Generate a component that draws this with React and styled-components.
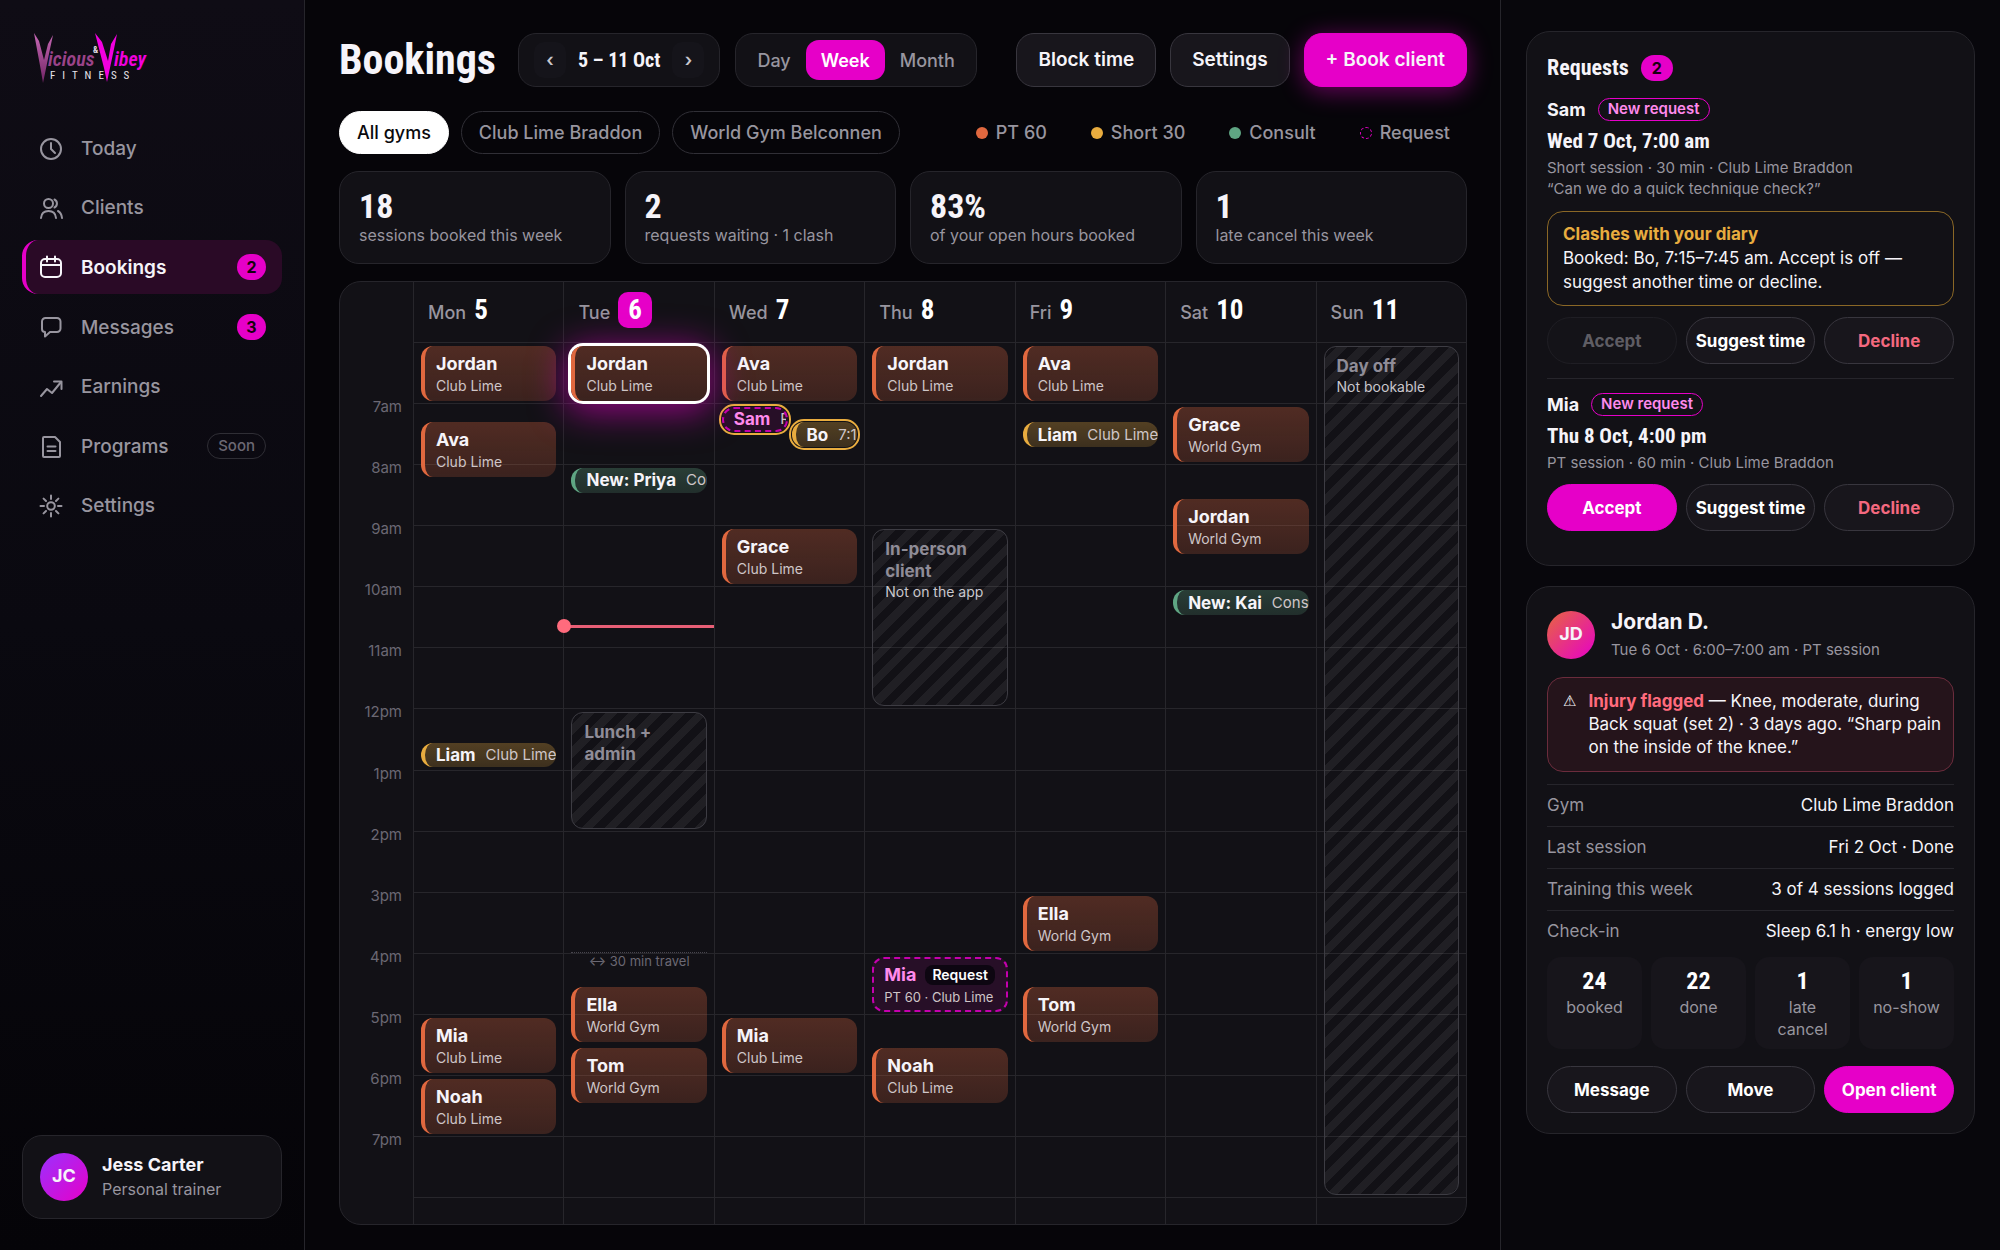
import React from 'react';
import styled, { createGlobalStyle, css } from 'styled-components';

const c = {
  pink: '#e600c8',
  pinkSoft: '#ff8aec',
  text: '#f6f4f9',
  mute: '#98959f',
  dim: '#6b6873',
  line: '#26252b',
  grid: 'rgba(255, 255, 255, 0.09)',
  card: '#121116',
  raised: '#18161c',
  orange: '#e0683f',
  amber: '#e8ac3f',
  green: '#5fa583',
  red: '#ff6b7d',
};
const sans = `Inter, "Noto Sans", sans-serif`;
const narrow = `"Roboto Condensed", "Liberation Sans Narrow", Roboto, sans-serif`;

const Global = createGlobalStyle`
  *, *::before, *::after { box-sizing: border-box; }
  body { margin: 0; background: #060509; color: ${c.text}; font-family: ${sans}; }
  button { font: inherit; color: inherit; margin: 0; padding: 0; border: 0; background: none; cursor: pointer; text-align: left; }
  a { color: inherit; text-decoration: none; }
  h1, h2, h3, p, dl, dd, dt, ul { margin: 0; padding: 0; }
  ul { list-style: none; }
`;

const Shell = styled.div`
  display: grid;
  grid-template-columns: 305px minmax(0, 1fr) 500px;
  min-height: 100vh;
`;

/* Sidebar */
const Sidebar = styled.aside`
  display: flex;
  flex-direction: column;
  padding: 31px 22px;
  border-right: 1px solid ${c.line};
  background: linear-gradient(180deg, #0f0c15 0%, #0a0910 50%, #050408 100%);
`;
const Brand = styled.a`
  display: block;
  height: 91px;
  padding-left: 10px;
`;
const Nav = styled.nav`
  display: flex;
  flex-direction: column;
  gap: 6px;
`;
const NavLink = styled.a`
  display: flex;
  align-items: center;
  gap: 18px;
  padding: 14px 16px 14px 13px;
  border-left: 4px solid ${(p) => (p.$active ? c.pink : 'transparent')};
  border-radius: 16px;
  background: ${(p) => (p.$active ? '#2a0a26' : 'transparent')};
  color: ${(p) => (p.$active ? c.text : c.mute)};
  font-size: 19px;
  font-weight: ${(p) => (p.$active ? 600 : 500)};
  line-height: 25px;
`;
const NavText = styled.span`
  flex: 1;
`;
const Count = styled.span`
  min-width: ${(p) => (p.$wide ? 32 : 29)}px;
  height: 26px;
  border-radius: 13px;
  background: ${c.pink};
  color: #16000f;
  font-size: 16px;
  font-weight: 700;
  line-height: 26px;
  text-align: center;
`;
const Soon = styled.span`
  height: 26px;
  padding: 0 10px;
  border: 1px solid #2f2e35;
  border-radius: 13px;
  color: ${c.dim};
  font-size: 15px;
  font-weight: 500;
  line-height: 24px;
`;
const UserCard = styled.button`
  display: flex;
  align-items: center;
  gap: 14px;
  margin-top: auto;
  padding: 17px;
  border: 1px solid ${c.line};
  border-radius: 20px;
  background: ${c.card};
`;
const Avatar = styled.span`
  flex: none;
  width: 48px;
  height: 48px;
  border-radius: 50%;
  background: linear-gradient(135deg, ${(p) => p.$from}, ${c.pink});
  font-size: 18px;
  font-weight: 700;
  line-height: 46px;
  text-align: center;
`;
const Stack = styled.span`
  display: flex;
  flex-direction: column;
`;
const UserName = styled.span`
  font-size: 18px;
  font-weight: 700;
  line-height: 24px;
`;
const UserRole = styled.span`
  color: ${c.mute};
  font-size: 16px;
  line-height: 24px;
`;

/* Main column */
const Main = styled.main`
  display: flex;
  flex-direction: column;
  padding: 33px 33px 25px 34px;
`;
const Topbar = styled.header`
  display: flex;
  align-items: center;
  gap: 15px;
  margin-bottom: 24px;
`;
const Title = styled.h1`
  margin-right: 7px;
  font: 700 42px/54px ${narrow};
`;
const Range = styled.div`
  display: flex;
  align-items: center;
  gap: 12px;
  height: 54px;
  padding: 0 15px;
  border: 1px solid ${c.line};
  border-radius: 18px;
  background: ${c.card};
  font: 700 20px/36px ${narrow};
`;
const Step = styled.button`
  width: 32px;
  height: 36px;
  border-radius: 10px;
  background: #15141a;
  color: #c9c7ce;
  font: 600 18px/30px ${sans};
  text-align: center;
`;
const Segments = styled.div`
  display: flex;
  padding: 6px;
  border: 1px solid ${c.line};
  border-radius: 18px;
  background: ${c.card};
`;
const Segment = styled.button`
  height: 40px;
  padding: 0 15px;
  border-radius: 13px;
  background: ${(p) => (p.$on ? c.pink : 'transparent')};
  color: ${(p) => (p.$on ? '#fff' : c.mute)};
  font-size: 18px;
  font-weight: ${(p) => (p.$on ? 600 : 500)};
`;
const Actions = styled.div`
  display: flex;
  gap: 14px;
  margin-left: auto;
`;
const Action = styled.button`
  height: 54px;
  padding: 0 21px 2px;
  border: 1px solid ${(p) => (p.$primary ? c.pink : '#38363e')};
  border-radius: 18px;
  background: ${(p) => (p.$primary ? c.pink : c.raised)};
  box-shadow: ${(p) => (p.$primary ? '0 4px 24px rgba(230, 0, 200, 0.45)' : 'none')};
  font-size: 19px;
  font-weight: 600;
  white-space: nowrap;
`;

const Filters = styled.div`
  display: flex;
  align-items: center;
  gap: 12px;
  margin-bottom: 17px;
`;
const Chip = styled.button`
  height: 43px;
  padding: 0 17px;
  border: 1px solid ${(p) => (p.$on ? '#fff' : '#302f36')};
  border-radius: 22px;
  background: ${(p) => (p.$on ? '#fff' : 'transparent')};
  color: ${(p) => (p.$on ? '#0a090d' : c.mute)};
  font-size: 18px;
  font-weight: 500;
  white-space: nowrap;
`;
const Legend = styled.ul`
  display: flex;
  gap: 44px;
  margin-left: auto;
  padding-right: 17px;
`;
const LegendItem = styled.li`
  display: flex;
  align-items: center;
  gap: 8px;
  color: ${c.mute};
  font-size: 18px;
  font-weight: 500;
  &::before {
    content: '';
    width: 12px;
    height: 12px;
    border-radius: 50%;
    background: ${(p) => p.$color};
    ${(p) => p.$dashed && css`border: 1px dashed ${c.pink};`}
  }
`;

const Kpis = styled.div`
  display: grid;
  grid-template-columns: repeat(4, 1fr);
  gap: 14px;
  margin-bottom: 17px;
`;
const Kpi = styled.div`
  display: flex;
  flex-direction: column;
  padding: 16px 19px;
  border: 1px solid ${c.line};
  border-radius: 20px;
  background: ${c.card};
`;
const KpiValue = styled.strong`
  font: 700 34px/36px ${narrow};
`;
const KpiLabel = styled.span`
  color: ${c.mute};
  font-size: 16px;
  line-height: 23px;
`;

/* Calendar */
const Calendar = styled.section`
  flex: 1;
  display: flex;
  flex-direction: column;
  min-height: 900px;
  border: 1px solid ${c.line};
  border-radius: 22px;
  background: ${c.card};
  overflow: hidden;
`;
const columns = css`
  display: grid;
  grid-template-columns: 73px repeat(7, minmax(0, 1fr));
`;
const Heads = styled.div`
  ${columns}
`;
const Head = styled.div`
  display: flex;
  align-items: baseline;
  gap: 8px;
  height: 61px;
  padding: 10px 14px 0;
  border-left: 1px solid ${c.grid};
  border-bottom: 1px solid ${c.grid};
  color: ${c.mute};
  font-size: 18px;
  font-weight: 500;
`;
const DayNumber = styled.span`
  padding: ${(p) => (p.$today ? '0 10px' : 0)};
  border-radius: 10px;
  background: ${(p) => (p.$today ? c.pink : 'transparent')};
  color: #fff;
  font: 700 27px/36px ${narrow};
`;
const Days = styled.div`
  ${columns}
  flex: 1;
`;
const Hours = styled.div`
  display: grid;
  grid-template-rows: repeat(14, 1fr);
  margin-bottom: 26px;
`;
const Hour = styled.span`
  margin-top: -7px;
  padding-right: 11px;
  color: ${c.dim};
  font-size: 15px;
  line-height: 20px;
  text-align: right;
`;
const Day = styled.div`
  display: grid;
  padding-bottom: 26px;
  border-left: 1px solid ${c.grid};
`;
const Track = styled.div`
  position: relative;
  display: grid;
  grid-template-rows: repeat(14, 1fr);
`;
const Slot = styled.div`
  border-bottom: 1px solid ${c.grid};
`;

const tones = {
  pt: ['224, 104, 64', c.orange],
  short: ['232, 172, 63', c.amber],
  consult: ['95, 165, 131', c.green],
};
const rings = {
  selected: css`
    z-index: 1;
    box-shadow: 0 0 0 3px #fff, 0 6px 36px 5px rgba(230, 0, 200, 0.6);
  `,
  clash: css`
    outline: 2px solid ${c.amber};
    outline-offset: 1px;
  `,
};
const lanes = {
  full: ['7px', '7px'],
  left: ['7px', 'calc(50% + 2px)'],
  right: ['calc(50% + 2px)', '7px'],
};
const placed = css`
  position: absolute;
  top: calc(${(p) => ((p.$start - 6) / 14) * 100}% + 3px);
  height: calc(${(p) => (p.$hours / 14) * 100}% - 6px);
  left: ${(p) => lanes[p.$lane || 'full'][0]};
  right: ${(p) => lanes[p.$lane || 'full'][1]};
`;
const look = {
  booked: css`
    border-left: 4px solid ${(p) => tones[p.$tone][1]};
    padding-left: 11px;
    background: linear-gradient(180deg, rgba(${(p) => tones[p.$tone][0]}, 0.3), rgba(${(p) => tones[p.$tone][0]}, 0.2));
  `,
  request: css`
    border: 2px dashed #c400ad;
    padding-left: 10px;
    background: rgba(230, 0, 200, 0.1);
    color: ${c.pinkSoft};
  `,
};
const EventBox = styled.button`
  ${placed}
  display: flex;
  overflow: hidden;
  border-radius: 12px;
  white-space: nowrap;
  ${(p) => (p.$tone === 'request' ? look.request : look.booked)}
  ${(p) =>
    p.$hours < 1
      ? css`
          align-items: center;
          gap: 10px;
        `
      : css`
          flex-direction: column;
          justify-content: center;
          padding-top: 3px;
        `}
  ${(p) => rings[p.$ring]}
`;
const EventTitle = styled.span`
  display: flex;
  align-items: center;
  gap: 9px;
  font-size: ${(p) => (p.$inline ? 17 : 18)}px;
  font-weight: 700;
  line-height: 22px;
`;
const noteSizes = { inline: 15, stacked: 14, tight: 13 };
const EventNote = styled.span`
  color: #cfc6c8;
  font-size: ${(p) => noteSizes[p.$fit]}px;
  line-height: 22px;
`;
const Tag = styled.span`
  padding: 0 7px;
  border-radius: 8px;
  background: #0d0611;
  color: #fff;
  font-size: 14px;
  font-weight: 600;
  line-height: 20px;
`;
const Blocked = styled.div`
  ${placed}
  display: flex;
  flex-direction: column;
  padding: 8px 12px;
  border: 1px solid #3d3c43;
  border-radius: 12px;
  background: repeating-linear-gradient(135deg, transparent 0 8px, rgba(255, 255, 255, 0.06) 8px 16px);
  color: #8f8c97;
  font-size: 17px;
  font-weight: 700;
  line-height: 22px;
`;
const BlockedNote = styled.span`
  color: #c9c7cd;
  font-size: 14px;
  font-weight: 400;
  line-height: 20px;
  white-space: nowrap;
`;
const Travel = styled.div`
  ${placed}
  margin-top: -5px;
  border-top: 1px dotted #47454d;
  color: ${c.dim};
  font-size: 13px;
  line-height: 16px;
  text-align: center;
`;
const Now = styled.div`
  position: absolute;
  top: ${(p) => ((p.$at - 6) / 14) * 100}%;
  left: 0;
  right: 0;
  height: 3px;
  background: #e85f76;
  &::before {
    content: '';
    position: absolute;
    top: -6px;
    left: -7px;
    width: 14px;
    height: 14px;
    border-radius: 50%;
    background: ${c.red};
  }
`;

/* Right panel */
const Panel = styled.aside`
  display: flex;
  flex-direction: column;
  gap: 20px;
  padding: 31px 25px;
  border-left: 1px solid ${c.line};
  background: #08070c;
`;
const Card = styled.section`
  padding: 20px;
  border: 1px solid ${c.line};
  border-radius: 24px;
  background: ${c.card};
`;
const CardTitle = styled.h2`
  display: flex;
  align-items: center;
  gap: 12px;
  font: 700 22px/32px ${narrow};
  ${Count} { font-family: ${sans}; }
`;
const Request = styled.article`
  padding: 13px 0 14px;
  & + & { border-top: 1px solid ${c.line}; }
`;
const RequestHead = styled.h3`
  display: flex;
  align-items: center;
  gap: 12px;
  height: 25px;
  font-size: 18px;
  font-weight: 700;
`;
const Pill = styled.span`
  height: 23px;
  padding: 0 9px;
  border: 1px solid ${c.pink};
  border-radius: 12px;
  color: ${c.pinkSoft};
  font-size: 15px;
  font-weight: 600;
  line-height: 20px;
`;
const When = styled.p`
  margin-top: 4px;
  font: 700 21px/31px ${narrow};
`;
const Meta = styled.p`
  color: ${c.mute};
  font-size: 15px;
  line-height: 21px;
`;
const Notice = styled.div`
  display: flex;
  gap: 12px;
  margin-top: 12px;
  padding: ${(p) => (p.$danger ? 12 : 10)}px 11px ${(p) => (p.$danger ? 12 : 11)}px 15px;
  border: 1px solid ${(p) => (p.$danger ? '#6b2c3c' : '#8a6726')};
  border-radius: 16px;
  background: ${(p) => (p.$danger ? '#25141b' : 'transparent')};
  font-size: 17px;
  line-height: ${(p) => (p.$danger ? 23 : 24)}px;
`;
const NoticeLead = styled.strong`
  color: ${(p) => (p.$danger ? c.red : c.amber)};
  font-weight: 700;
  display: ${(p) => (p.$danger ? 'inline' : 'block')};
`;
const WarnSign = styled.span`
  font: 15px/23px "DejaVu Sans", sans-serif;
`;
const Buttons = styled.div`
  display: grid;
  grid-template-columns: repeat(3, 1fr);
  gap: 9px;
  margin-top: ${(p) => p.$gap || 11}px;
`;
const Pushable = styled.button`
  height: 47px;
  border: 1px solid ${(p) => (p.$primary ? c.pink : '#38363e')};
  border-radius: 24px;
  background: ${(p) => (p.$primary ? c.pink : c.raised)};
  color: ${(p) => (p.$danger ? '#f4697f' : '#fff')};
  font-size: 17px;
  font-weight: 700;
  text-align: center;
  white-space: nowrap;
  &:disabled {
    border-color: #1f1e24;
    background: #141318;
    color: #5f5d64;
    cursor: default;
  }
`;
const Person = styled.header`
  display: flex;
  align-items: center;
  gap: 16px;
  margin-bottom: 14px;
`;
const PersonName = styled.h2`
  font-size: 21px;
  font-weight: 700;
  line-height: 30px;
`;
const PersonMeta = styled(Meta)`
  line-height: 26px;
`;
const Facts = styled.dl`
  margin-top: 12px;
  margin-bottom: 5px;
`;
const Fact = styled.div`
  display: flex;
  justify-content: space-between;
  border-top: 1px solid ${c.line};
  font-size: 17px;
  line-height: 41px;
  dt { color: ${c.mute}; }
`;
const Tiles = styled.div`
  display: grid;
  grid-template-columns: repeat(4, 1fr);
  gap: 9px;
`;
const Tile = styled.div`
  display: flex;
  flex-direction: column;
  padding: 9px 12px;
  border-radius: 14px;
  background: #17151b;
  color: ${c.mute};
  font-size: 16px;
  line-height: 22px;
  text-align: center;
`;
const TileValue = styled.strong`
  color: #fff;
  font: 700 24px/30px ${narrow};
`;

const Stroke = styled.svg`
  flex: none;
  width: 24px;
  height: 24px;
  fill: none;
  stroke: currentColor;
  stroke-width: 2;
  stroke-linecap: round;
  stroke-linejoin: round;
`;
const icons = {
  Today: (
    <>
      <circle cx="12" cy="12" r="10" />
      <path d="M12 6v6l4 4" />
    </>
  ),
  Clients: (
    <>
      <circle cx="9.5" cy="7.5" r="4.5" />
      <path d="M2 22c.4-5 3.3-7 7.5-7s7.1 2 7.5 7" />
      <path d="M15.5 3.5a4.5 4.5 0 0 1 0 8" />
      <path d="M19 15c2.4 1.2 3.6 3.6 4 7" />
    </>
  ),
  Bookings: (
    <>
      <rect x="2" y="4" width="20" height="18" rx="4" />
      <path d="M2 10h20M8 1.5v5M16 1.5v5" />
    </>
  ),
  Messages: <path d="M6.5 3H18a3.500 3.500 0 0 1 3.500 3.500v7A3.500 3.500 0 0 1 18 17h-7l-5 4.500V17a3 3 0 0 1-3-3V6.500A3.500 3.500 0 0 1 6.500 3z" />,
  Earnings: (
    <>
      <path d="M2 21l6-7 5 4 9-11" />
      <path d="M15 6.500h7.500V14" />
    </>
  ),
  Programs: (
    <>
      <path d="M5 3h11l5 5v14a1 1 0 0 1-1 1H5a1 1 0 0 1-1-1V4a1 1 0 0 1 1-1z" />
      <path d="M8.500 12.500h8M8.500 17h8" />
    </>
  ),
  Settings: (
    <>
      <circle cx="12" cy="12" r="3.800" />
      <path d="M12 1.500v3.500M12 19v3.500M1.500 12H5M19 12h3.500M4.600 4.600l2.400 2.400M17 17l2.400 2.400M4.600 19.400L7 17M17 7l2.400-2.400" />
    </>
  ),
};

const Wordmark = styled.svg`
  display: block;
  font-family: ${narrow};
  font-weight: 600;
`;
function Logo() {
  return (
    <Wordmark width="122" height="54" viewBox="0 0 122 54" role="img" aria-label="Vicious & Vibey Fitness">
      <defs>
        <linearGradient id="dusk" x1="0" y1="0" x2="0" y2="1">
          <stop offset="0" stopColor="#c869b6" />
          <stop offset="1" stopColor="#6f2363" />
        </linearGradient>
      </defs>
      <path fill="url(#dusk)" d="M2 2l5 8 5 19 4-16 5-9-3 14-7 34-2-12z" />
      <text x="16" y="35" fontSize="20" fontStyle="italic" fill="#9b4389">icious</text>
      <text x="61" y="22" fontSize="9" fill="#e8e4ea">&amp;</text>
      <path fill="#f200df" d="M63 2l7 9 6 19 3-17 6-10-3 15-7 33-3-14z" />
      <text x="82" y="35" fontSize="20" fontStyle="italic" fill="#f200df">ibey</text>
      <text x="18" y="48" fontSize="11" fontWeight="400" letterSpacing="7" fill="#e8e4ea">FITNESS</text>
    </Wordmark>
  );
}

const nav = [
  ['Today'],
  ['Clients'],
  ['Bookings', 2],
  ['Messages', 3],
  ['Earnings'],
  ['Programs', 'Soon'],
  ['Settings'],
];
const kpis = [
  ['18', 'sessions booked this week'],
  ['2', 'requests waiting · 1 clash'],
  ['83%', 'of your open hours booked'],
  ['1', 'late cancel this week'],
];
const hours = ['', '7am', '8am', '9am', '10am', '11am', '12pm', '1pm', '2pm', '3pm', '4pm', '5pm', '6pm', '7pm'];
const CL = 'Club Lime';
const WG = 'World Gym';
const pt = (start, name, note, extra) => ({ tone: 'pt', start, hours: 1, name, note, ...extra });
const half = (tone, start, name, note, extra) => ({ tone, start, hours: 0.5, name, note, ...extra });
const week = [
  {
    day: 'Mon',
    date: 5,
    items: [pt(6, 'Jordan', CL), pt(7.25, 'Ava', CL), half('short', 12.5, 'Liam', CL), pt(17, 'Mia', CL), pt(18, 'Noah', CL)],
  },
  {
    day: 'Tue',
    date: 6,
    today: true,
    items: [
      pt(6, 'Jordan', CL, { ring: 'selected' }),
      half('consult', 8, 'New: Priya', 'Consult'),
      { tone: 'blocked', start: 12, hours: 2, name: 'Lunch + admin' },
      { tone: 'travel', start: 16, hours: 0.5, name: '↔ 30 min travel' },
      pt(16.5, 'Ella', WG),
      pt(17.5, 'Tom', WG),
    ],
  },
  {
    day: 'Wed',
    date: 7,
    items: [
      pt(6, 'Ava', CL),
      half('request', 7, 'Sam', 'Request', { lane: 'left', ring: 'clash' }),
      half('short', 7.25, 'Bo', '7:15', { lane: 'right', ring: 'clash' }),
      pt(9, 'Grace', CL),
      pt(17, 'Mia', CL),
    ],
  },
  {
    day: 'Thu',
    date: 8,
    items: [
      pt(6, 'Jordan', CL),
      { tone: 'blocked', start: 9, hours: 3, name: 'In-person client', note: 'Not on the app' },
      { tone: 'request', start: 16, hours: 1, name: 'Mia', tag: 'Request', note: 'PT 60 · Club Lime' },
      pt(17.5, 'Noah', CL),
    ],
  },
  {
    day: 'Fri',
    date: 9,
    items: [pt(6, 'Ava', CL), half('short', 7.25, 'Liam', CL), pt(15, 'Ella', WG), pt(16.5, 'Tom', WG)],
  },
  {
    day: 'Sat',
    date: 10,
    items: [pt(7, 'Grace', WG), pt(8.5, 'Jordan', WG), half('consult', 10, 'New: Kai', 'Consult')],
  },
  {
    day: 'Sun',
    date: 11,
    items: [{ tone: 'blocked', start: 6, hours: 14, name: 'Day off', note: 'Not bookable' }],
  },
];

function Entry({ item }) {
  const place = { $start: item.start, $hours: item.hours, $lane: item.lane };
  if (item.tone === 'travel') return <Travel {...place}>{item.name}</Travel>;
  if (item.tone === 'blocked') {
    return (
      <Blocked {...place}>
        {item.name}
        {item.note && <BlockedNote>{item.note}</BlockedNote>}
      </Blocked>
    );
  }
  const inline = item.hours < 1;
  return (
    <EventBox type="button" {...place} $tone={item.tone} $ring={item.ring}>
      <EventTitle $inline={inline}>
        {item.name}
        {item.tag && <Tag>{item.tag}</Tag>}
      </EventTitle>
      <EventNote $fit={inline ? 'inline' : item.tag ? 'tight' : 'stacked'}>{item.note}</EventNote>
    </EventBox>
  );
}

export default function App() {
  return (
    <>
      <Global />
      <Shell>
        <Sidebar>
          <Brand href="#home">
            <Logo />
          </Brand>
          <Nav>
            {nav.map(([label, badge]) => (
              <NavLink key={label} href={`#${label.toLowerCase()}`} $active={label === 'Bookings'}>
                <Stroke viewBox="0 0 24 24" aria-hidden="true">
                  {icons[label]}
                </Stroke>
                <NavText>{label}</NavText>
                {badge && (badge === 'Soon' ? <Soon>{badge}</Soon> : <Count>{badge}</Count>)}
              </NavLink>
            ))}
          </Nav>
          <UserCard type="button">
            <Avatar $from="#9b30ff">JC</Avatar>
            <Stack>
              <UserName>Jess Carter</UserName>
              <UserRole>Personal trainer</UserRole>
            </Stack>
          </UserCard>
        </Sidebar>

        <Main>
          <Topbar>
            <Title>Bookings</Title>
            <Range>
              <Step type="button" aria-label="Previous week">‹</Step>
              5 – 11 Oct
              <Step type="button" aria-label="Next week">›</Step>
            </Range>
            <Segments>
              <Segment type="button">Day</Segment>
              <Segment type="button" $on>Week</Segment>
              <Segment type="button">Month</Segment>
            </Segments>
            <Actions>
              <Action type="button">Block time</Action>
              <Action type="button">Settings</Action>
              <Action type="button" $primary>+ Book client</Action>
            </Actions>
          </Topbar>

          <Filters>
            <Chip type="button" $on>All gyms</Chip>
            <Chip type="button">Club Lime Braddon</Chip>
            <Chip type="button">World Gym Belconnen</Chip>
            <Legend>
              <LegendItem $color={c.orange}>PT 60</LegendItem>
              <LegendItem $color={c.amber}>Short 30</LegendItem>
              <LegendItem $color={c.green}>Consult</LegendItem>
              <LegendItem $color="transparent" $dashed>Request</LegendItem>
            </Legend>
          </Filters>

          <Kpis>
            {kpis.map(([value, label]) => (
              <Kpi key={label}>
                <KpiValue>{value}</KpiValue>
                <KpiLabel>{label}</KpiLabel>
              </Kpi>
            ))}
          </Kpis>

          <Calendar aria-label="Week of 5 to 11 October">
            <Heads>
              <span />
              {week.map((d) => (
                <Head key={d.day}>
                  {d.day}
                  <DayNumber $today={d.today}>{d.date}</DayNumber>
                </Head>
              ))}
            </Heads>
            <Days>
              <Hours>
                {hours.map((h) => (
                  <Hour key={h}>{h}</Hour>
                ))}
              </Hours>
              {week.map((d) => (
                <Day key={d.day}>
                  <Track>
                    {hours.map((h) => (
                      <Slot key={h} />
                    ))}
                    {d.items.map((item) => (
                      <Entry key={`${item.name}${item.start}`} item={item} />
                    ))}
                    {d.today && <Now $at={10.62} />}
                  </Track>
                </Day>
              ))}
            </Days>
          </Calendar>
        </Main>

        <Panel>
          <Card>
            <CardTitle>
              Requests <Count $wide>2</Count>
            </CardTitle>
            <Request>
              <RequestHead>
                Sam <Pill>New request</Pill>
              </RequestHead>
              <When>Wed 7 Oct, 7:00 am</When>
              <Meta>Short session · 30 min · Club Lime Braddon</Meta>
              <Meta>“Can we do a quick technique check?”</Meta>
              <Notice>
                <p>
                  <NoticeLead>Clashes with your diary</NoticeLead>
                  Booked: Bo, 7:15–7:45 am. Accept is off — suggest another time or decline.
                </p>
              </Notice>
              <Buttons>
                <Pushable type="button" disabled>Accept</Pushable>
                <Pushable type="button">Suggest time</Pushable>
                <Pushable type="button" $danger>Decline</Pushable>
              </Buttons>
            </Request>
            <Request>
              <RequestHead>
                Mia <Pill>New request</Pill>
              </RequestHead>
              <When>Thu 8 Oct, 4:00 pm</When>
              <Meta>PT session · 60 min · Club Lime Braddon</Meta>
              <Buttons>
                <Pushable type="button" $primary>Accept</Pushable>
                <Pushable type="button">Suggest time</Pushable>
                <Pushable type="button" $danger>Decline</Pushable>
              </Buttons>
            </Request>
          </Card>

          <Card>
            <Person>
              <Avatar $from="#e8663f">JD</Avatar>
              <Stack>
                <PersonName>Jordan D.</PersonName>
                <PersonMeta>Tue 6 Oct · 6:00–7:00 am · PT session</PersonMeta>
              </Stack>
            </Person>
            <Notice $danger>
              <WarnSign aria-hidden="true">⚠</WarnSign>
              <p>
                <NoticeLead $danger>Injury flagged</NoticeLead> — Knee, moderate, during Back squat (set 2) · 3 days ago.
                “Sharp pain on the inside of the knee.”
              </p>
            </Notice>
            <Facts>
              <Fact>
                <dt>Gym</dt>
                <dd>Club Lime Braddon</dd>
              </Fact>
              <Fact>
                <dt>Last session</dt>
                <dd>Fri 2 Oct · Done</dd>
              </Fact>
              <Fact>
                <dt>Training this week</dt>
                <dd>3 of 4 sessions logged</dd>
              </Fact>
              <Fact>
                <dt>Check-in</dt>
                <dd>Sleep 6.1 h · energy low</dd>
              </Fact>
            </Facts>
            <Tiles>
              <Tile><TileValue>24</TileValue>booked</Tile>
              <Tile><TileValue>22</TileValue>done</Tile>
              <Tile><TileValue>1</TileValue>late cancel</Tile>
              <Tile><TileValue>1</TileValue>no-show</Tile>
            </Tiles>
            <Buttons $gap={17}>
              <Pushable type="button">Message</Pushable>
              <Pushable type="button">Move</Pushable>
              <Pushable type="button" $primary>Open client</Pushable>
            </Buttons>
          </Card>
        </Panel>
      </Shell>
    </>
  );
}
